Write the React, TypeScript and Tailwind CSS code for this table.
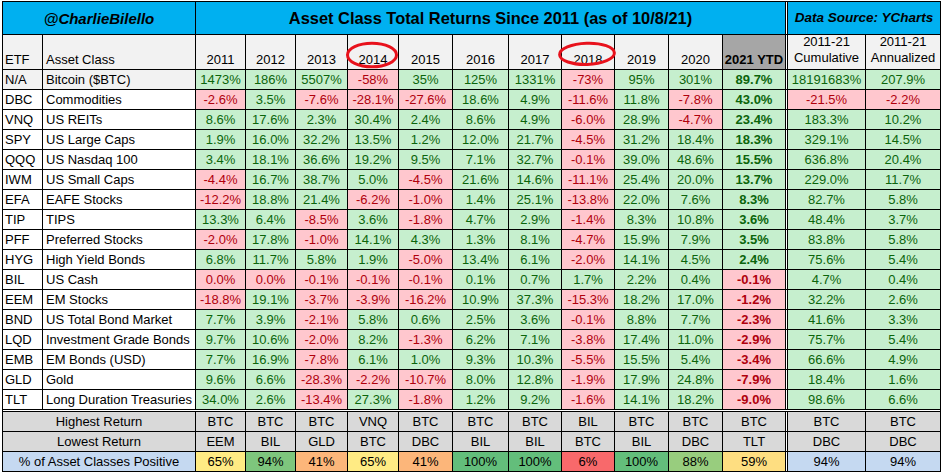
const years = ['2011', '2012', '2013', '2014', '2015', '2016', '2017', '2018', '2019', '2020'];

const rows = [
  { etf: 'N/A', name: 'Bitcoin ($BTC)', v: ['1473%', '186%', '5507%', '-58%', '35%', '125%', '1331%', '-73%', '95%', '301%', '89.7%', '18191683%', '207.9%'] },
  { etf: 'DBC', name: 'Commodities', v: ['-2.6%', '3.5%', '-7.6%', '-28.1%', '-27.6%', '18.6%', '4.9%', '-11.6%', '11.8%', '-7.8%', '43.0%', '-21.5%', '-2.2%'] },
  { etf: 'VNQ', name: 'US REITs', v: ['8.6%', '17.6%', '2.3%', '30.4%', '2.4%', '8.6%', '4.9%', '-6.0%', '28.9%', '-4.7%', '23.4%', '183.3%', '10.2%'] },
  { etf: 'SPY', name: 'US Large Caps', v: ['1.9%', '16.0%', '32.2%', '13.5%', '1.2%', '12.0%', '21.7%', '-4.5%', '31.2%', '18.4%', '18.3%', '329.1%', '14.5%'] },
  { etf: 'QQQ', name: 'US Nasdaq 100', v: ['3.4%', '18.1%', '36.6%', '19.2%', '9.5%', '7.1%', '32.7%', '-0.1%', '39.0%', '48.6%', '15.5%', '636.8%', '20.4%'] },
  { etf: 'IWM', name: 'US Small Caps', v: ['-4.4%', '16.7%', '38.7%', '5.0%', '-4.5%', '21.6%', '14.6%', '-11.1%', '25.4%', '20.0%', '13.7%', '229.0%', '11.7%'] },
  { etf: 'EFA', name: 'EAFE Stocks', v: ['-12.2%', '18.8%', '21.4%', '-6.2%', '-1.0%', '1.4%', '25.1%', '-13.8%', '22.0%', '7.6%', '8.3%', '82.7%', '5.8%'] },
  { etf: 'TIP', name: 'TIPS', v: ['13.3%', '6.4%', '-8.5%', '3.6%', '-1.8%', '4.7%', '2.9%', '-1.4%', '8.3%', '10.8%', '3.6%', '48.4%', '3.7%'] },
  { etf: 'PFF', name: 'Preferred Stocks', v: ['-2.0%', '17.8%', '-1.0%', '14.1%', '4.3%', '1.3%', '8.1%', '-4.7%', '15.9%', '7.9%', '3.5%', '83.8%', '5.8%'] },
  { etf: 'HYG', name: 'High Yield Bonds', v: ['6.8%', '11.7%', '5.8%', '1.9%', '-5.0%', '13.4%', '6.1%', '-2.0%', '14.1%', '4.5%', '2.4%', '75.6%', '5.4%'] },
  { etf: 'BIL', name: 'US Cash', v: ['0.0%', '0.0%', '-0.1%', '-0.1%', '-0.1%', '0.1%', '0.7%', '1.7%', '2.2%', '0.4%', '-0.1%', '4.7%', '0.4%'] },
  { etf: 'EEM', name: 'EM Stocks', v: ['-18.8%', '19.1%', '-3.7%', '-3.9%', '-16.2%', '10.9%', '37.3%', '-15.3%', '18.2%', '17.0%', '-1.2%', '32.2%', '2.6%'] },
  { etf: 'BND', name: 'US Total Bond Market', v: ['7.7%', '3.9%', '-2.1%', '5.8%', '0.6%', '2.5%', '3.6%', '-0.1%', '8.8%', '7.7%', '-2.3%', '41.6%', '3.3%'] },
  { etf: 'LQD', name: 'Investment Grade Bonds', v: ['9.7%', '10.6%', '-2.0%', '8.2%', '-1.3%', '6.2%', '7.1%', '-3.8%', '17.4%', '11.0%', '-2.9%', '75.7%', '5.4%'] },
  { etf: 'EMB', name: 'EM Bonds (USD)', v: ['7.7%', '16.9%', '-7.8%', '6.1%', '1.0%', '9.3%', '10.3%', '-5.5%', '15.5%', '5.4%', '-3.4%', '66.6%', '4.9%'] },
  { etf: 'GLD', name: 'Gold', v: ['9.6%', '6.6%', '-28.3%', '-2.2%', '-10.7%', '8.0%', '12.8%', '-1.9%', '17.9%', '24.8%', '-7.9%', '18.4%', '1.6%'] },
  { etf: 'TLT', name: 'Long Duration Treasuries', v: ['34.0%', '2.6%', '-13.4%', '27.3%', '-1.8%', '1.2%', '9.2%', '-1.6%', '14.1%', '18.2%', '-9.0%', '98.6%', '6.6%'] },
];

const highest = ['BTC', 'BTC', 'BTC', 'VNQ', 'BTC', 'BTC', 'BTC', 'BIL', 'BTC', 'BTC', 'BTC', 'BTC', 'BTC'];
const lowest = ['EEM', 'BIL', 'GLD', 'BTC', 'DBC', 'BIL', 'BIL', 'BTC', 'BIL', 'DBC', 'TLT', 'DBC', 'DBC'];

// colour scale from the sheet (red -> yellow -> green), summary columns in blue
const positive = [
  { v: '65%', bg: 'bg-[#ffeb84]' },
  { v: '94%', bg: 'bg-[#7ec67d]' },
  { v: '41%', bg: 'bg-[#fcb67a]' },
  { v: '65%', bg: 'bg-[#ffeb84]' },
  { v: '41%', bg: 'bg-[#fcb67a]' },
  { v: '100%', bg: 'bg-[#63be7b]' },
  { v: '100%', bg: 'bg-[#63be7b]' },
  { v: '6%', bg: 'bg-[#f8696b]' },
  { v: '100%', bg: 'bg-[#63be7b]' },
  { v: '88%', bg: 'bg-[#98cd7e]' },
  { v: '59%', bg: 'bg-[#fede81]' },
  { v: '94%', bg: 'bg-[#c5d9f1]' },
  { v: '94%', bg: 'bg-[#c5d9f1]' },
];

const isDown = (v: string) => v.startsWith('-') || v === '0.0%';

function ValueCell({ v, bold }: { v: string; bold?: boolean }) {
  const tone = isDown(v) ? 'bg-[#ffc7ce] text-[#b0000c]' : 'bg-[#c6efce] text-[#0b650b]';
  return <div className={`flex items-center justify-center ${tone} ${bold ? 'font-bold' : ''}`}>{v}</div>;
}

function Spacer() {
  return <div className="bg-white" />;
}

export default function App() {
  return (
    <div className="relative w-[943px] h-[474px] bg-white font-['Liberation_Sans',_Arial,_sans-serif] text-[13px] leading-none text-black">
      <div className="ml-[2px] mt-px inline-grid gap-px bg-black border border-black grid-cols-[39px_152px_49px_49px_51px_50px_53px_55px_52px_52px_53px_53px_62px_1px_77px_74px] grid-rows-[32px_34px_repeat(17,19px)_1px_repeat(3,19px)]">
        {/* title row */}
        <div className="col-span-2 flex items-center justify-center bg-[#00b0f0] text-[15px] font-bold italic">
          @CharlieBilello
        </div>
        <div className="col-span-11 flex items-center justify-center bg-[#00b0f0] text-[16.4px] font-bold">
          Asset Class Total Returns Since 2011 (as of 10/8/21)
        </div>
        <Spacer />
        <div className="col-span-2 flex items-center justify-center bg-[#00b0f0] text-[13.5px] font-bold italic">
          Data Source: YCharts
        </div>

        {/* header row */}
        <div className="flex items-end bg-[#f2f2f2] pl-[2px] pb-[3px]">ETF</div>
        <div className="flex items-end bg-[#f2f2f2] pl-[3px] pb-[3px]">Asset Class</div>
        {years.map((y) => (
          <div key={y} className="flex items-end justify-center bg-[#f2f2f2] pb-[3px]">
            {y}
          </div>
        ))}
        <div className="flex items-end justify-center bg-[#a6a6a6] pb-[3px] font-bold">2021 YTD</div>
        <Spacer />
        <div className="flex flex-col items-center justify-end bg-[#f2f2f2] pb-[3px] leading-[16px]">
          <span>2011-21</span>
          <span>Cumulative</span>
        </div>
        <div className="flex flex-col items-center justify-end bg-[#f2f2f2] pb-[3px] leading-[16px]">
          <span>2011-21</span>
          <span>Annualized</span>
        </div>

        {/* asset rows */}
        {rows.map((r, i) => (
          <div key={r.etf} className="contents">
            <div className={`flex items-center pl-[2px] ${i === 0 ? 'bg-[#f2f2f2]' : 'bg-white'}`}>{r.etf}</div>
            <div className={`flex items-center pl-[3px] whitespace-nowrap ${i === 0 ? 'bg-[#f2f2f2]' : 'bg-white'}`}>
              {r.name}
            </div>
            {r.v.slice(0, 10).map((v, j) => (
              <ValueCell key={j} v={v} />
            ))}
            <ValueCell v={r.v[10]} bold />
            <Spacer />
            <ValueCell v={r.v[11]} />
            <ValueCell v={r.v[12]} />
          </div>
        ))}

        {/* double rule */}
        <div className="col-span-full bg-white" />

        {/* summary rows */}
        <div className="col-span-2 flex items-center justify-center bg-[#d9d9d9]">Highest Return</div>
        {highest.map((t, j) => (
          <div key={j} className="contents">
            {j === 11 && <Spacer />}
            <div className="flex items-center justify-center bg-[#d9d9d9]">{t}</div>
          </div>
        ))}

        <div className="col-span-2 flex items-center justify-center bg-[#d9d9d9]">Lowest Return</div>
        {lowest.map((t, j) => (
          <div key={j} className="contents">
            {j === 11 && <Spacer />}
            <div className="flex items-center justify-center bg-[#d9d9d9]">{t}</div>
          </div>
        ))}

        <div className="col-span-2 flex items-center justify-center bg-[#c5d9f1]">% of Asset Classes Positive</div>
        {positive.map((p, j) => (
          <div key={j} className="contents">
            {j === 11 && <Spacer />}
            <div className={`flex items-center justify-center ${p.bg}`}>{p.v}</div>
          </div>
        ))}
      </div>

      {/* hand-drawn circles around the two down years for bitcoin */}
      <svg className="pointer-events-none absolute left-0 top-0" width="943" height="474" viewBox="0 0 943 474">
        <ellipse cx="372" cy="55" rx="24.5" ry="11.8" fill="none" stroke="#e8121c" strokeWidth="3" />
        <ellipse cx="587" cy="53.8" rx="27.4" ry="10.6" fill="none" stroke="#e8121c" strokeWidth="3" transform="rotate(-2 587 53.8)" />
      </svg>
    </div>
  );
}
